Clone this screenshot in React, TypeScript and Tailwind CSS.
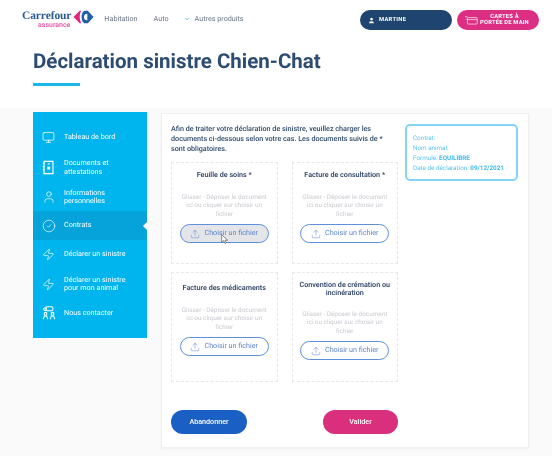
import { Monitor, User, CircleCheck, Zap, Upload, ChevronDown } from "lucide-react";
import type { ReactNode } from "react";

const Logo = () => (
  <div className="flex items-start">
    <div className="flex flex-col items-end">
      <span className="font-['Liberation_Serif',serif] text-[11.5px] leading-[11px] font-bold text-[#2a5a96] tracking-[-0.1px]">Carrefour</span>
      <span className="font-['Roboto',sans-serif] text-[7px] leading-[7px] font-medium text-[#ec4fa0] mr-[1px]">assurance</span>
    </div>
    <svg viewBox="0 0 22 14" className="w-[21px] h-[14px] ml-[2px] mt-[-1px]">
      <path d="M7 0.5 L0.5 7 L7 13.5 L8.5 13.5 Q5.5 7 8.5 0.5 Z" fill="#e2257f" />
      <path d="M12 0.5 L15.5 0.5 L21.5 7 L15.5 13.5 L12 13.5 Q9 12 9 7 Q9 2 12 0.5 Z M14.5 3.5 Q11.5 4 11.5 7 Q11.5 10 14.5 10.5 L15 10.5 L15 3.5 Z" fillRule="evenodd" fill="#1f5fa8" />
    </svg>
  </div>
);

const DocIcon = () => (
  <svg viewBox="0 0 16 18" className="w-[13px] h-[15px]" fill="none" stroke="#fff" strokeWidth="1.4">
    <path d="M2.5 1.5h11v15h-11z" />
    <path d="M1 4h2M1 8h2M1 12h2" />
    <rect x="6.5" y="8" width="3.5" height="3.5" fill="#fff" stroke="none" />
    <path d="M7 4.5h2.5" />
  </svg>
);

const ContactIcon = () => (
  <svg viewBox="0 0 18 18" className="w-[14px] h-[14px]" fill="none" stroke="#fff" strokeWidth="1.3">
    <rect x="5" y="1" width="9" height="5" rx="1.5" />
    <circle cx="4" cy="4" r="1.8" />
    <circle cx="4.5" cy="10" r="1.8" />
    <circle cx="13.5" cy="10" r="1.8" />
    <path d="M1.5 17l1.5-4h3l1.5 4M10.5 17l1.5-4h3l1.5 4" />
  </svg>
);

const Item = ({ icon, children, active, cls }: { icon: ReactNode; children: ReactNode; active?: boolean; cls: string }) => (
  <div className={`relative flex items-center ${cls} ${active ? "bg-[#05a3d9]" : ""}`}>
    <div className="w-[31px] flex justify-center shrink-0">{icon}</div>
    <div className="text-white text-[7.2px] leading-[8.4px] font-normal">{children}</div>
    {active && (
      <div className="absolute right-0 top-1/2 -translate-y-1/2 w-0 h-0 border-y-[4px] border-y-transparent border-r-[4px] border-r-white" />
    )}
  </div>
);

const Zone = ({ title, pt, gap, mt, hover }: { title: ReactNode; pt: string; gap: string; mt: string; hover?: boolean }) => (
  <div className={`relative flex flex-col items-center border border-dashed border-[#e6e8eb] h-full ${pt}`}>
    <div className="text-[7.2px] leading-[8px] font-semibold text-[#354a6b] text-center whitespace-nowrap">{title}</div>
    <div className={`text-[6.4px] leading-[8.4px] text-[#c8cbd0] text-center w-[88px] ${gap}`}>
      Glisser - Déposer le document ici ou cliquer sur choisir un fichier
    </div>
    <div className={`relative w-[89px] h-[19px] rounded-full border-[1.8px] border-[#5f8fdc] flex items-center justify-center gap-[4px] text-[7.2px] text-[#5d83c9] ${mt} ${hover ? "bg-[#e3e5e9]" : "bg-white"}`}>
      <Upload size={10} strokeWidth={1.2} />
      <span>Choisir un fichier</span>
      {hover && (
        <svg viewBox="0 0 12 16" className="absolute left-[40px] top-[9px] w-[8px] h-[11px]">
          <path d="M1 1v11l3-2.5 2 4.5 2-1-2-4h4z" fill="#fff" stroke="#555" strokeWidth="1" />
        </svg>
      )}
    </div>
  </div>
);

export default function App() {
  return (
    <div className="w-[552px] h-[456px] overflow-hidden bg-[#fafafa] font-['Roboto',sans-serif] blur-[0.4px] [text-rendering:geometricPrecision]">
      <header className="h-[108px] bg-white px-[22px] pt-[10px] relative">
        <div className="flex items-center h-[20px]">
          <Logo />
          <nav className="flex items-center text-[7.2px] text-[#6b7588] ml-[10px] mt-[-1px]">
            <span>Habitation</span>
            <span className="ml-[16px]">Auto</span>
            <ChevronDown size={6} strokeWidth={3} className="ml-[15px] text-[#2aaee3]" />
            <span className="ml-[5px]">Autres produits</span>
          </nav>
          <div className="ml-auto flex items-center gap-[5px] mr-[-9px]">
            <div className="w-[92px] h-[20px] rounded-full bg-[#1f4470] flex items-center pl-[8px] gap-[4px] text-white text-[5.8px] font-bold tracking-[0.3px]">
              <User size={7} fill="#fff" strokeWidth={1} />
              <span>MARTINE</span>
            </div>
            <div className="w-[82px] h-[20px] rounded-full bg-[#dc2f84] flex items-center pl-[8px] gap-[2px] text-white">
              <svg viewBox="0 0 16 12" className="w-[13px] h-[10px] shrink-0" fill="none" stroke="#fff" strokeWidth="0.8">
                <rect x="3" y="3" width="12" height="8" rx="1" />
                <path d="M3 5.5h12M0 2h3M1 5h1" />
              </svg>
              <span className="text-[5.8px] leading-[6px] font-bold text-center tracking-[0.2px] whitespace-nowrap">CARTES À<br />PORTÉE DE MAIN</span>
            </div>
          </div>
        </div>
        <h1 className="ml-[11px] mt-[20px] text-[20.5px] leading-[24px] font-bold text-[#2d4c72] whitespace-nowrap">Déclaration sinistre Chien-Chat</h1>
        <div className="ml-[11px] mt-[9px] w-[47px] h-[2.5px] bg-[#1db7ef]" />
      </header>

      <div className="flex items-start pl-[33px] pt-[4px]">
        <aside className="w-[114px] h-[226px] bg-[#00b4ee] pt-[11px] shrink-0">
          <Item cls="h-[29px]" icon={<Monitor size={13} color="#fff" strokeWidth={1.4} />}>Tableau de bord</Item>
          <Item cls="h-[31px]" icon={<DocIcon />}>Documents et<br />attestations</Item>
          <Item cls="h-[28px]" icon={<User size={14} color="#fff" strokeWidth={1.2} />}>Informations<br />personnelles</Item>
          <Item cls="h-[29px]" active icon={<CircleCheck size={14} color="#fff" strokeWidth={1.1} />}>Contrats</Item>
          <Item cls="h-[29px]" icon={<Zap size={13} color="#fff" strokeWidth={1.3} />}>Déclarer un sinistre</Item>
          <Item cls="h-[30px]" icon={<Zap size={13} color="#fff" strokeWidth={1.3} />}>Déclarer un sinistre<br />pour mon animal</Item>
          <Item cls="h-[28px]" icon={<ContactIcon />}>Nous contacter</Item>
        </aside>

        <main className="w-[368px] h-[335px] ml-[14px] mt-[1px] bg-white border border-[#f0f0f2] shadow-[0_1px_2px_rgba(0,0,0,0.05)] flex pl-[9px] pt-[10px] shrink-0">
          <div className="w-[227px] shrink-0">
            <p className="text-[7.2px] leading-[10px] font-medium text-[#2d4a6b] w-[212px]">
              Afin de traiter votre déclaration de sinistre, veuillez charger les documents ci-dessous selon votre cas. Les documents suivis de * sont obligatoires.
            </p>
            <div className="grid grid-cols-2 gap-x-[14px] gap-y-[8px] grid-rows-[102px_110px] mt-[8px]">
              <Zone title="Feuille de soins *" pt="pt-[8px]" gap="mt-[14px]" mt="mt-[6px]" hover />
              <Zone title="Facture de consultation *" pt="pt-[8px]" gap="mt-[14px]" mt="mt-[6px]" />
              <Zone title="Facture des médicaments" pt="pt-[11px]" gap="mt-[14px]" mt="mt-[6px]" />
              <Zone title={<>Convention de crémation ou<br />incinération</>} pt="pt-[8px]" gap="mt-[13px]" mt="mt-[6px]" />
            </div>
            <div className="flex justify-between mt-[28px]">
              <button className="w-[76px] h-[24px] rounded-full bg-[#1a5fc4] text-white text-[7.2px] font-medium">Abandonner</button>
              <button className="w-[75px] h-[24px] rounded-full bg-[#d92f7c] text-white text-[7.2px] font-medium">Valider</button>
            </div>
          </div>
          <div className="w-[113px] h-[57px] ml-[7px] border-2 border-[#85d3f7] rounded-[5px] pl-[6px] pt-[7px] text-[6.3px] leading-[10px] text-[#5cc3f2] shrink-0">
            <div>Contrat:</div>
            <div>Nom animal:</div>
            <div>Formule: <span className="font-bold text-[#3db8ee]">EQUILIBRE</span></div>
            <div>Date de déclaration: <span className="font-bold text-[#3db8ee]">09/12/2021</span></div>
          </div>
        </main>
      </div>
    </div>
  );
}
